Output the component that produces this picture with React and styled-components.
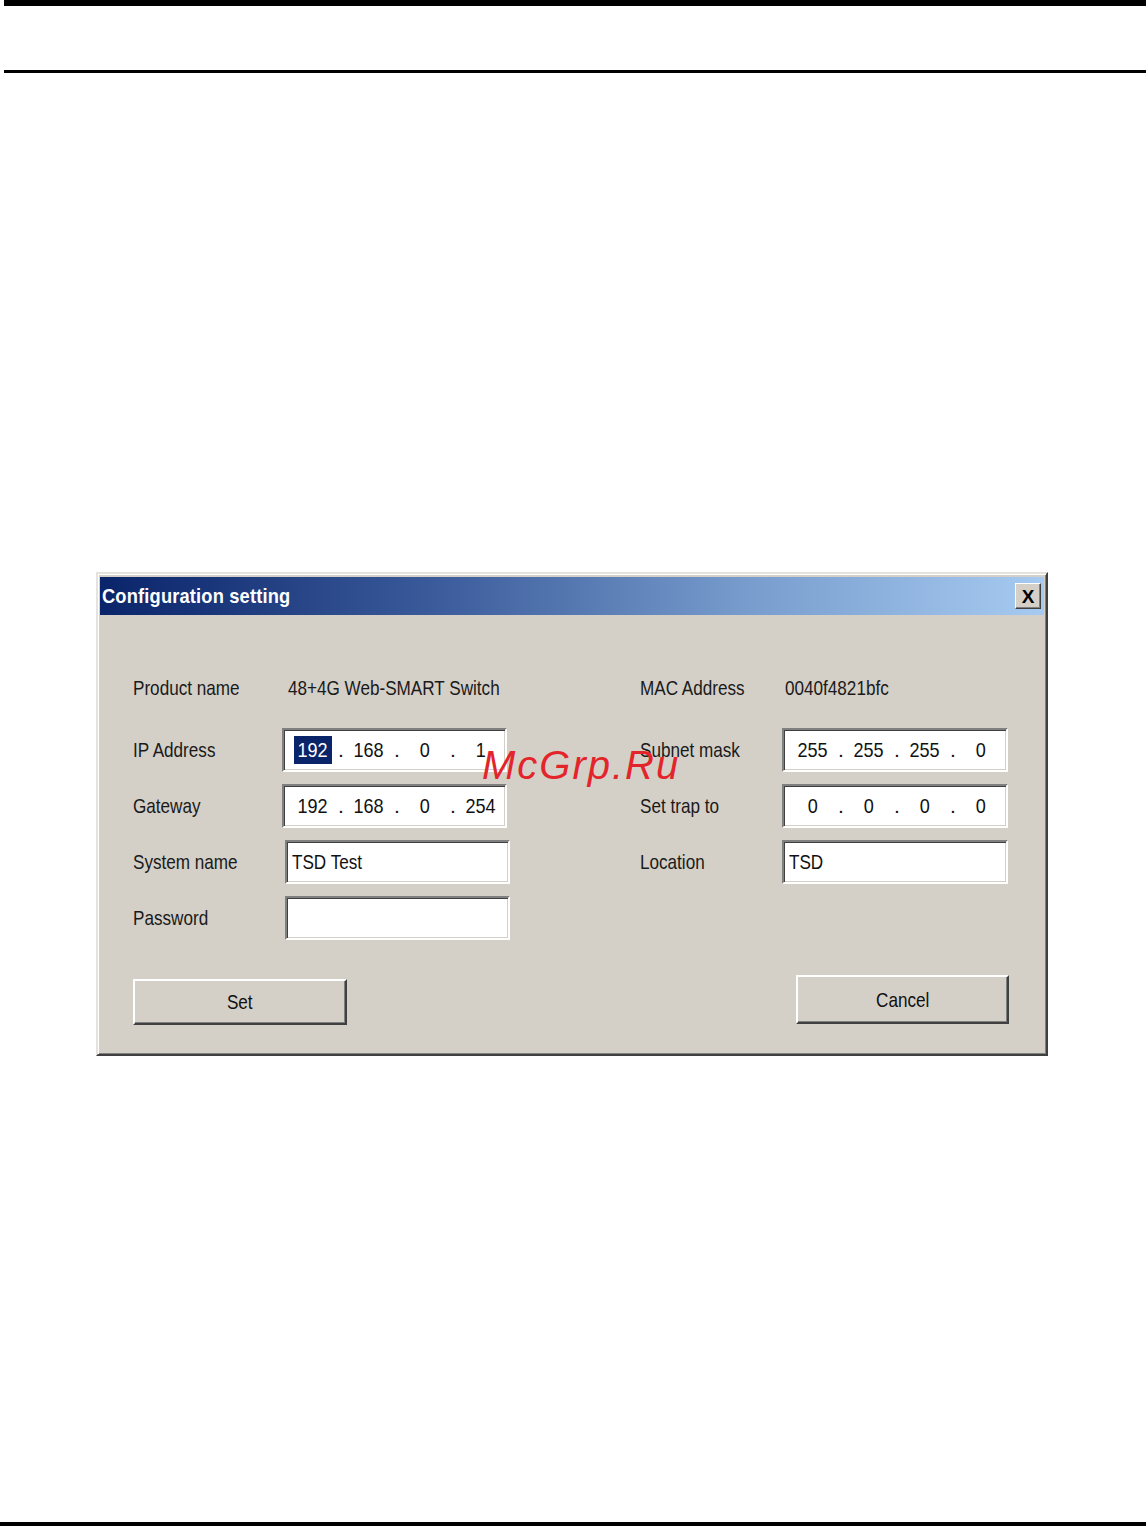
import React from "react";
import styled, { createGlobalStyle } from "styled-components";

const GlobalStyle = createGlobalStyle`
  html, body {
    margin: 0;
    padding: 0;
    background: #ffffff;
    overflow: hidden;
  }
  body {
    font-family: "Liberation Sans", Arial, sans-serif;
  }
`;

const Page = styled.div`
  position: relative;
  width: 1146px;
  height: 1526px;
  display: flex;
  flex-direction: column;
  background: #ffffff;
`;

const Bar = styled.div`
  height: ${(p) => p.$h}px;
  margin-left: ${(p) => p.$left || 0}px;
  margin-top: ${(p) => p.$top || 0}px;
  background: #000;
  flex-shrink: 0;
`;

const Footer = styled(Bar)`
  margin-top: auto;
`;

const Window = styled.div`
  position: relative;
  box-sizing: border-box;
  width: 952px;
  height: 484px;
  margin: 499px 0 0 96px;
  background: #d4d0c8;
  border: 2px solid;
  border-color: #e6e3de #404040 #404040 #e6e3de;
  box-shadow: inset 1px 1px #ffffff, inset -1px -1px #808080;
  padding: 3px 2px 2px 2px;
  display: flex;
  flex-direction: column;
`;

const TitleBar = styled.div`
  height: 38px;
  flex-shrink: 0;
  display: flex;
  align-items: center;
  justify-content: space-between;
  padding: 0 3px 0 2px;
  background: linear-gradient(90deg, #0a246a 0%, #3a5a9a 35%, #7a9fcf 70%, #a6caf0 100%);
`;

const Narrow = styled.span`
  display: inline-block;
  white-space: nowrap;
  transform: scaleX(${(p) => p.$sx || 0.815});
  transform-origin: ${(p) => (p.$center ? "center" : "left")} center;
`;

const Title = styled(Narrow)`
  color: #ffffff;
  font-weight: bold;
  font-size: 21px;
  letter-spacing: 0.2px;
`;

const CloseButton = styled.div`
  box-sizing: border-box;
  width: 26px;
  height: 26px;
  background: #d4d0c8;
  border: 1px solid;
  border-color: #ffffff #404040 #404040 #ffffff;
  box-shadow: inset -1px -1px #808080;
  display: flex;
  align-items: center;
  justify-content: center;
  font-weight: bold;
  font-size: 19px;
  color: #000;
  line-height: 1;
`;

const Body = styled.div`
  flex: 1;
  display: flex;
  flex-direction: column;
  padding: 57px 35px 0 33px;
`;

const Form = styled.div`
  display: grid;
  grid-template-columns: 149px 228px 130px 142px 226px;
  grid-template-rows: repeat(5, 44px);
  row-gap: 12px;
  align-items: center;
`;

const Label = styled.div`
  grid-column: ${(p) => p.$col};
  align-self: center;
  margin-bottom: ${(p) => (p.$first ? 12 : 0)}px;
  margin-left: ${(p) => p.$indent || 0}px;
  font-size: 21px;
  color: #1a1a1a;
`;

const Value = styled(Label)``;

const Field = styled.div`
  grid-column: ${(p) => p.$col};
  box-sizing: border-box;
  width: ${(p) => p.$w || 225}px;
  height: 44px;
  margin-left: ${(p) => p.$shift || 0}px;
  background: #ffffff;
  border: 2px solid;
  border-color: #808080 #ffffff #ffffff #808080;
  box-shadow: inset 1px 1px #404040, inset -1px -1px #d4d0c8;
  display: flex;
  align-items: center;
  padding-left: 5px;
  font-size: 21px;
  color: #111;
`;

const Segment = styled.div`
  width: 48px;
  text-align: center;
`;

const Dot = styled.div`
  width: 8px;
  text-align: center;
`;

const Selected = styled.span`
  display: inline-block;
  background: #0a246a;
  color: #ffffff;
  line-height: 28px;
  padding: 0 1px;
`;

const Buttons = styled.div`
  display: flex;
  justify-content: space-between;
  align-items: flex-start;
  margin-top: 35px;
`;

const Button = styled.div`
  box-sizing: border-box;
  width: ${(p) => p.$w}px;
  height: ${(p) => p.$h}px;
  margin-top: ${(p) => p.$top || 0}px;
  background: #d4d0c8;
  border: 2px solid;
  border-color: #ffffff #404040 #404040 #ffffff;
  box-shadow: inset -1px -1px #808080;
  display: flex;
  align-items: center;
  justify-content: center;
  font-size: 21px;
  color: #111;
`;

const Watermark = styled.div`
  position: absolute;
  left: 384px;
  top: 171px;
  font-family: "Liberation Sans", Arial, sans-serif;
  font-style: italic;
  font-size: 40px;
  line-height: 1;
  letter-spacing: 2px;
  color: #e3252b;
  pointer-events: none;
`;

function IpField({ parts, col, w, highlight }) {
  return (
    <Field $col={col} $w={w}>
      {parts.map((p, i) => (
        <React.Fragment key={i}>
          {i > 0 && <Dot>.</Dot>}
          <Segment>
            {highlight && i === 0 ? (
              <Selected>
                <Narrow $sx={0.86} $center>{p}</Narrow>
              </Selected>
            ) : (
              <Narrow $sx={0.86} $center>{p}</Narrow>
            )}
          </Segment>
        </React.Fragment>
      ))}
    </Field>
  );
}

function Text({ children }) {
  return <Narrow>{children}</Narrow>;
}

export default function App() {
  return (
    <>
      <GlobalStyle />
      <Page>
        <Bar $h={6} $left={4} />
        <Bar $h={3} $left={4} $top={64} />

        <Window>
          <TitleBar>
            <Title $sx={0.87}>Configuration setting</Title>
            <CloseButton>X</CloseButton>
          </TitleBar>

          <Body>
            <Form>
              <Label $col={1} $first><Text>Product name</Text></Label>
              <Value $col={2} $first $indent={6}><Text>48+4G Web-SMART Switch</Text></Value>
              <Label $col={4} $first><Text>MAC Address</Text></Label>
              <Value $col={5} $first $indent={3}><Text>0040f4821bfc</Text></Value>

              <Label $col={1}><Text>IP Address</Text></Label>
              <IpField col={2} parts={["192", "168", "0", "1"]} highlight />
              <Label $col={4}><Text>Subnet mask</Text></Label>
              <IpField col={5} w={226} parts={["255", "255", "255", "0"]} />

              <Label $col={1}><Text>Gateway</Text></Label>
              <IpField col={2} parts={["192", "168", "0", "254"]} />
              <Label $col={4}><Text>Set trap to</Text></Label>
              <IpField col={5} w={226} parts={["0", "0", "0", "0"]} />

              <Label $col={1}><Text>System name</Text></Label>
              <Field $col={2} $shift={3}><Text>TSD Test</Text></Field>
              <Label $col={4}><Text>Location</Text></Label>
              <Field $col={5} $w={226}><Text>TSD</Text></Field>

              <Label $col={1}><Text>Password</Text></Label>
              <Field $col={2} $shift={3} />
            </Form>

            <Buttons>
              <Button $w={214} $h={46} $top={4}>
                <Narrow $center>Set</Narrow>
              </Button>
              <Button $w={213} $h={49}>
                <Narrow $center>Cancel</Narrow>
              </Button>
            </Buttons>
          </Body>

          <Watermark>McGrp.Ru</Watermark>
        </Window>

        <Footer $h={4} />
      </Page>
    </>
  );
}
